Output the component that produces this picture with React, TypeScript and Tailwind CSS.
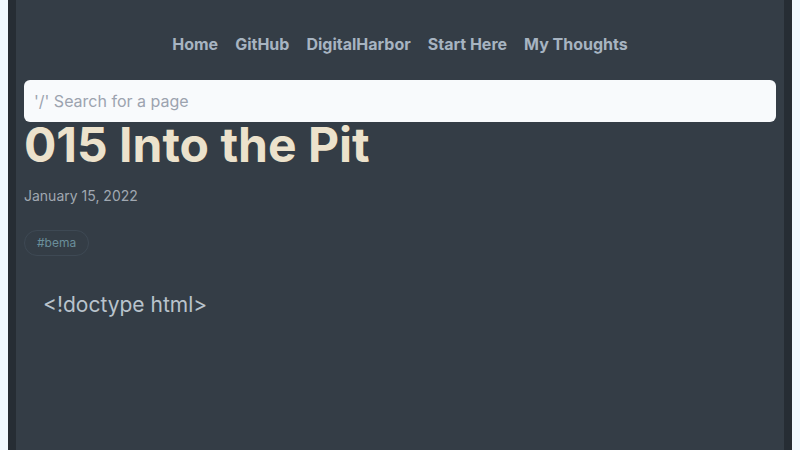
export default function App() {
  const links = ['Home', 'GitHub', 'DigitalHarbor', 'Start Here', 'My Thoughts'];
  return (
    <div className="min-h-screen bg-[#f0f9ff] font-['Inter',sans-serif]">
      <div className="mx-auto max-w-[784px] min-h-screen border-x-8 border-[#262d34] bg-[#343d46] px-2">
        <nav className="flex justify-center gap-[17px] pt-[32px] pb-[24px]">
          {links.map((l) => (
            <a key={l} className="text-base font-bold text-[#a7b4c1]">
              {l}
            </a>
          ))}
        </nav>
        <input
          type="text"
          placeholder="'/' Search for a page"
          className="block w-full h-[42px] rounded-md bg-[#f8fafc] px-[10px] text-base text-gray-700 placeholder:text-[#9ca3af] outline-none"
        />
        <h1 className="text-[48px] leading-[46px] font-bold text-[#ece2cc]">
          015 Into the Pit
        </h1>
        <p className="mt-[18px] text-sm text-[#a0a8b1]">January 15, 2022</p>
        <div className="mt-[24px] flex">
          <span className="rounded-full border border-[#3e4954] px-3 py-[4px] text-xs text-[#6a8f9b]">
            #bema
          </span>
        </div>
        <div className="mt-[33px] pl-[19px] text-[21px] text-[#b9c3cc]">&lt;!doctype html&gt;</div>
      </div>
    </div>
  );
}
